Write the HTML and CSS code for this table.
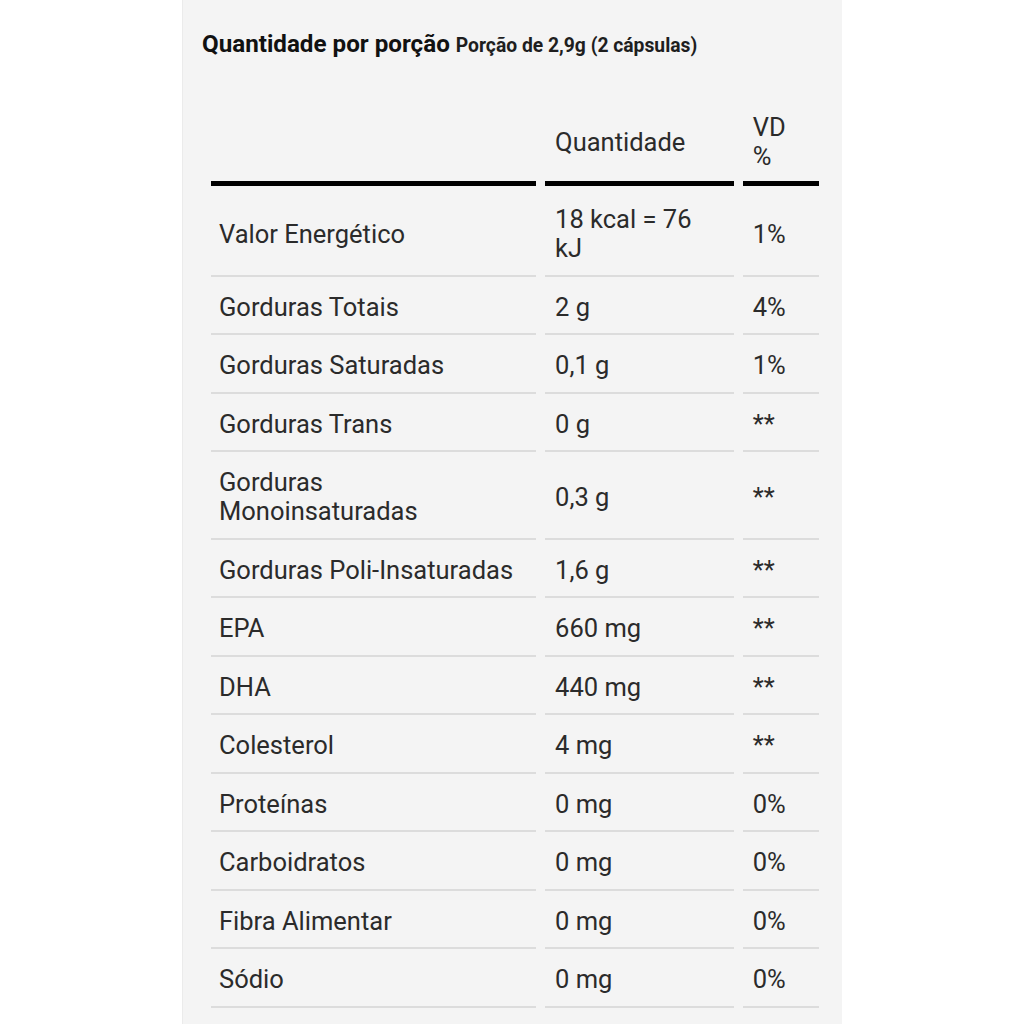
FILE: index.html
```html
<!DOCTYPE html>
<html lang="pt-BR">
<head>
<meta charset="utf-8">
<title>Informação Nutricional</title>
<link rel="stylesheet" href="styles.css">
</head>
<body>
<main class="panel">
  <h2 class="title">Quantidade por porção <span class="portion">Porção de 2,9g (2 cápsulas)</span></h2>
  <table class="nutri">
    <colgroup>
      <col class="c1"><col class="c2"><col class="c3">
    </colgroup>
    <thead>
      <tr><th></th><th>Quantidade</th><th>VD<br>%</th></tr>
    </thead>
    <tbody>
      <tr><td>Valor Energético</td><td>18 kcal = 76 kJ</td><td>1%</td></tr>
      <tr><td>Gorduras Totais</td><td>2 g</td><td>4%</td></tr>
      <tr><td>Gorduras Saturadas</td><td>0,1 g</td><td>1%</td></tr>
      <tr><td>Gorduras Trans</td><td>0 g</td><td>**</td></tr>
      <tr><td>Gorduras Monoinsaturadas</td><td>0,3 g</td><td>**</td></tr>
      <tr><td>Gorduras Poli-Insaturadas</td><td>1,6 g</td><td>**</td></tr>
      <tr><td>EPA</td><td>660 mg</td><td>**</td></tr>
      <tr><td>DHA</td><td>440 mg</td><td>**</td></tr>
      <tr><td>Colesterol</td><td>4 mg</td><td>**</td></tr>
      <tr><td>Proteínas</td><td>0 mg</td><td>0%</td></tr>
      <tr><td>Carboidratos</td><td>0 mg</td><td>0%</td></tr>
      <tr><td>Fibra Alimentar</td><td>0 mg</td><td>0%</td></tr>
      <tr><td>Sódio</td><td>0 mg</td><td>0%</td></tr>
    </tbody>
  </table>
</main>
</body>
</html>
```

FILE: styles.css
```css
html, body {
  margin: 0;
  padding: 0;
  background: #ffffff;
}
body {
  font-family: Roboto, "Liberation Sans", Arial, sans-serif;
  color: #2b2b2b;
}
.panel {
  width: 660px;
  margin: 0 auto;
  min-height: 1024px;
  box-sizing: border-box;
  background: #f4f4f4;
  border-left: 1px solid #ebebeb;
  padding: 30px 15px 0 19px;
}
.title {
  margin: 0;
  font-size: 24.2px;
  line-height: 28px;
  font-weight: 700;
  color: #111;
}
.portion {
  font-size: 19.3px;
  font-weight: 700;
  color: #1e1e1e;
}
.nutri {
  margin-top: 38px;
  border-collapse: separate;
  border-spacing: 9.5px 0;
  table-layout: fixed;
  width: 626px;
  font-size: 25.5px;
  line-height: 29px;
}
.c1 { width: 324px; }
.c2 { width: 188px; }
.c3 { width: 76px; }
.nutri th,
.nutri td {
  text-align: left;
  vertical-align: middle;
  font-weight: 400;
  padding: 16px 9px 11.5px;
}
.nutri td:first-child {
  padding-left: 8px;
}
.nutri td:nth-child(2),
.nutri th:nth-child(2) {
  padding-left: 10px;
  padding-right: 14px;
}
.nutri td:nth-child(3),
.nutri th:nth-child(3) {
  padding-left: 10px;
}
.nutri th {
  border-bottom: 5px solid #000;
  padding-top: 15px;
  padding-bottom: 10px;
}
.nutri tbody tr:first-child td {
  padding-top: 19px;
}
.nutri td {
  border-bottom: 2px solid #dcdcdc;
}
```
